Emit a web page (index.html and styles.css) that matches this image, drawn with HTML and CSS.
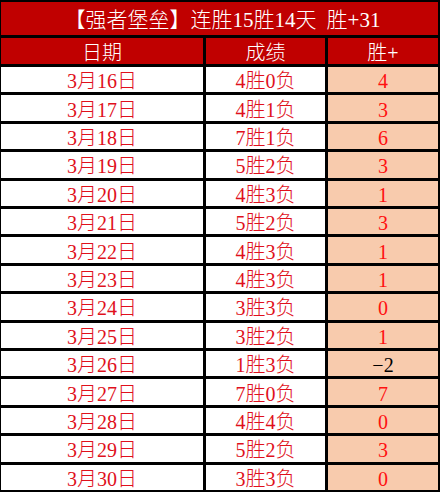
FILE: index.html
```html
<!DOCTYPE html>
<html lang="zh">
<head>
<meta charset="utf-8">
<link rel="stylesheet" href="styles.css">
</head>
<body>
<div class="sheet">
  <div class="cell title">【强者堡垒】连胜15胜14天<span class="gap"></span>胜+31</div>
  <div class="cell head">日期</div>
  <div class="cell head">成绩</div>
  <div class="cell head">胜+</div>

  <div class="cell date">3月16日</div><div class="cell rec">4胜0负</div><div class="cell win">4</div>
  <div class="cell date">3月17日</div><div class="cell rec">4胜1负</div><div class="cell win">3</div>
  <div class="cell date">3月18日</div><div class="cell rec">7胜1负</div><div class="cell win">6</div>
  <div class="cell date">3月19日</div><div class="cell rec">5胜2负</div><div class="cell win">3</div>
  <div class="cell date">3月20日</div><div class="cell rec">4胜3负</div><div class="cell win">1</div>
  <div class="cell date">3月21日</div><div class="cell rec">5胜2负</div><div class="cell win">3</div>
  <div class="cell date">3月22日</div><div class="cell rec">4胜3负</div><div class="cell win">1</div>
  <div class="cell date">3月23日</div><div class="cell rec">4胜3负</div><div class="cell win">1</div>
  <div class="cell date">3月24日</div><div class="cell rec">3胜3负</div><div class="cell win">0</div>
  <div class="cell date">3月25日</div><div class="cell rec">3胜2负</div><div class="cell win">1</div>
  <div class="cell date">3月26日</div><div class="cell rec">1胜3负</div><div class="cell win neg">−2</div>
  <div class="cell date">3月27日</div><div class="cell rec">7胜0负</div><div class="cell win">7</div>
  <div class="cell date">3月28日</div><div class="cell rec">4胜4负</div><div class="cell win">0</div>
  <div class="cell date">3月29日</div><div class="cell rec">5胜2负</div><div class="cell win">3</div>
  <div class="cell date">3月30日</div><div class="cell rec">3胜3负</div><div class="cell win">0</div>
</div>
</body>
</html>
```

FILE: styles.css
```css
html, body {
  margin: 0;
  padding: 0;
  background: #ffffff;
}

.sheet {
  box-sizing: border-box;
  width: 440px;
  height: 492px;
  background: #000000;
  padding: 2px 2px 2px 1px;
  display: grid;
  grid-template-columns: 202px 119px 110px;
  grid-template-rows: 33px 26px repeat(15, 1fr);
  column-gap: 3px;
  row-gap: 3px;
  font-family: "Liberation Serif", "Noto Sans CJK SC", serif;
  font-weight: 300;
}

.cell {
  display: flex;
  align-items: center;
  justify-content: center;
  font-size: 20px;
  line-height: 1;
  padding-top: 3px;
  box-sizing: border-box;
  white-space: nowrap;
}

.title {
  grid-column: 1 / 4;
  background: #c00000;
  color: #ffffff;
  font-size: 21px;
  padding-left: 6px;
}

.gap {
  display: inline-block;
  width: 10px;
}

.head {
  background: #c00000;
  color: #ffffff;
}

.date,
.rec {
  background: #ffffff;
  color: #e0101c;
}

.win {
  background: #f8cbad;
  color: #ff1010;
}

.win.neg {
  color: #000000;
}
```
